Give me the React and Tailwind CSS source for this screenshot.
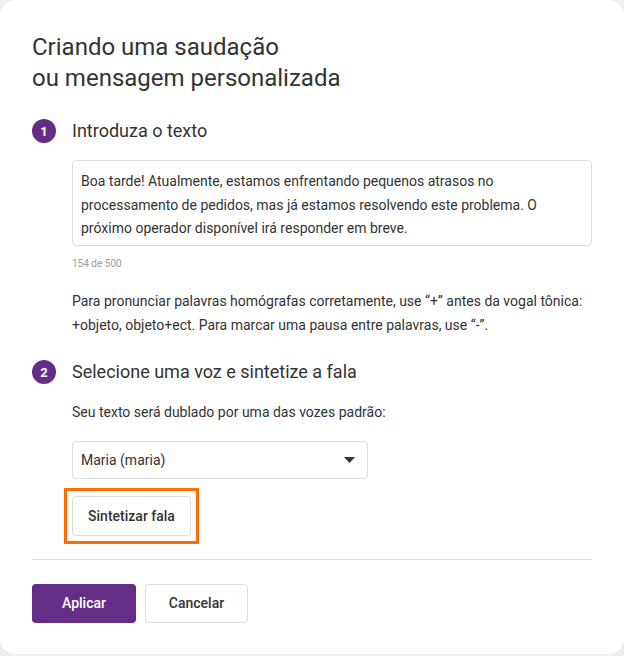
import React, { useState } from 'react';

const PURPLE = 'bg-[#662d86]';

function StepBadge({ n }) {
  return (
    <div className={`w-6 h-6 rounded-full ${PURPLE} text-white flex items-center justify-center text-[13px] font-bold leading-none`}>{n}</div>
  );
}

function StepHeading({ n, children }) {
  return (
    <div className="flex items-center gap-4 h-6">
      <StepBadge n={n} />
      <h2 className="text-[18px] leading-6 text-[#333]">{children}</h2>
    </div>
  );
}

export default function App() {
  const [text, setText] = useState('Boa tarde! Atualmente, estamos enfrentando pequenos atrasos no processamento de pedidos, mas já estamos resolvendo este problema. O próximo operador disponível irá responder em breve.');
  const [voice, setVoice] = useState('maria');

  return (
    <div className="min-h-[656px] bg-[#eef0ef]" style={{ fontFamily: 'Roboto, "Noto Sans", sans-serif' }}>
      <div className="h-[654px] bg-white rounded-[16px] px-8 pt-8 text-[#333]">
        <h1 className="text-[24px] leading-[31px] text-[#333]">Criando uma saudação<br />ou mensagem personalizada</h1>

        {/* step 1 */}
        <div className="mt-[25px]">
          <StepHeading n={1}>Introduza o texto</StepHeading>
          <div className="ml-10 mt-[17px]">
            <textarea
              value={text}
              onChange={(e) => setText(e.target.value)}
              className="block w-full h-[86px] resize-none border border-[#dcdcdc] rounded-[4px] px-[8px] py-[9px] text-[14px] leading-[23.5px] text-[#333] outline-none"
            />
            <div className="mt-[11px] text-[10px] leading-[14px] text-[#9a9a9a]">154 de 500</div>
            <p className="mt-[18px] text-[14px] leading-6 text-[#333]">
              Para pronunciar palavras homógrafas corretamente, use “+” antes da vogal tônica: +objeto, objeto+ect. Para marcar uma pausa entre palavras, use “-”.
            </p>
          </div>
        </div>

        {/* step 2 */}
        <div className="mt-[23px]">
          <StepHeading n={2}>Selecione uma voz e sintetize a fala</StepHeading>
          <div className="ml-10 mt-4">
            <p className="text-[14px] leading-6 text-[#333]">Seu texto será dublado por uma das vozes padrão:</p>
            <div className="relative mt-[17px] w-[296px] h-[38px]">
              <select
                value={voice}
                onChange={(e) => setVoice(e.target.value)}
                className="appearance-none w-full h-full border border-[#dcdcdc] rounded-[4px] pl-[8px] pr-8 text-[14px] text-[#333] bg-white outline-none"
              >
                <option value="maria">Maria (maria)</option>
              </select>
              <svg className="absolute right-[13px] top-[16px] pointer-events-none" width="11" height="6" viewBox="0 0 11 6">
                <path d="M0 0h11L5.5 6z" fill="#333" />
              </svg>
            </div>
            <div className="inline-block mt-[9px] -ml-2 border-[3px] border-[#ff6c00] p-[5px]">
              <button className="block w-[119px] h-10 border border-[#dcdcdc] rounded-[4px] bg-white text-[14px] font-medium text-[#333]">Sintetizar fala</button>
            </div>
          </div>
        </div>

        <div className="mt-[15px] border-t border-[#dcdcdc]" />

        <div className="mt-6 flex gap-[9px]">
          <button className={`w-[104px] h-[39px] rounded-[4px] ${PURPLE} text-white text-[14px] font-medium`}>Aplicar</button>
          <button className="w-[103px] h-[39px] rounded-[4px] border border-[#dcdcdc] bg-white text-[#333] text-[14px] font-medium">Cancelar</button>
        </div>
      </div>
    </div>
  );
}
